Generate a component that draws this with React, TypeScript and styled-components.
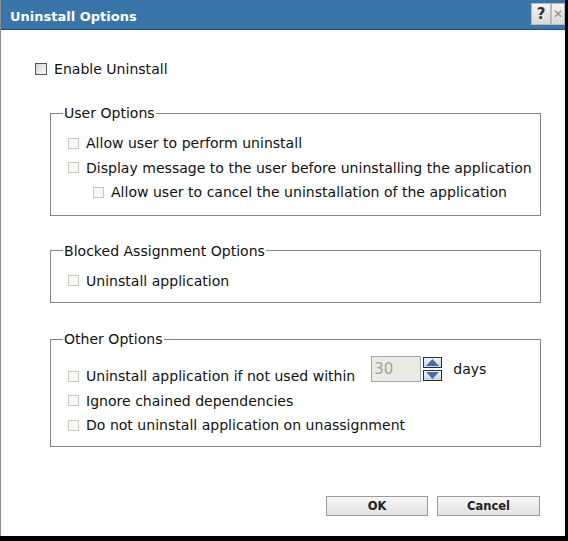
import React from "react";
import styled, { createGlobalStyle } from "styled-components";

const Global = createGlobalStyle`
  html, body { margin: 0; padding: 0; background: #000; }
  body { width: 568px; height: 541px; overflow: hidden; }
  * { box-sizing: border-box; }
`;

const Dialog = styled.div`
  width: 565px;
  height: 536px;
  background: #fff;
  border-left: 1px solid #8c8c8c;
  overflow: hidden;
  display: flex;
  flex-direction: column;
  font-family: "DejaVu Sans", Verdana, sans-serif;
  font-size: 14.05px;
  color: #111;
`;

const TitleBar = styled.div`
  height: 30px;
  flex: none;
  background: #3a75a9;
  border-bottom: 1px solid #24496b;
  display: flex;
  align-items: flex-start;
  justify-content: space-between;
  padding-left: 9px;
`;

const Title = styled.div`
  color: #fff;
  font-weight: bold;
  font-size: 13px;
  line-height: 16px;
  margin-top: 9px;
`;

const TitleButtons = styled.div`
  display: flex;
  margin-top: 3px;
`;

const TitleButton = styled.div<{ $w: number; $muted?: boolean }>`
  width: ${(p) => p.$w}px;
  height: 22px;
  background: linear-gradient(#f4f4f4, #d9d9d9);
  border: 1px solid #b8b8b8;
  color: ${(p) => (p.$muted ? "#8a8a8a" : "#333")};
  font-weight: bold;
  font-size: ${(p) => (p.$muted ? 12 : 15)}px;
  line-height: 20px;
  text-align: center;
  overflow: hidden;
`;

const Content = styled.div`
  flex: 1;
  display: flex;
  flex-direction: column;
  padding: 31px 24px 0 34px;
`;

const Row = styled.label<{ $indent?: number }>`
  display: flex;
  align-items: center;
  gap: 7px;
  height: 24.5px;
  padding-left: ${(p) => p.$indent || 0}px;
  white-space: nowrap;
`;

const TopRow = styled(Row)`
  height: 16px;
`;

const Box = styled.span<{ $enabled?: boolean }>`
  flex: none;
  display: inline-block;
  width: ${(p) => (p.$enabled ? 12 : 11)}px;
  height: ${(p) => (p.$enabled ? 12 : 11)}px;
  border: 1px solid ${(p) => (p.$enabled ? "#4d5566" : "#c9c9c2")};
  background: ${(p) =>
    p.$enabled ? "linear-gradient(135deg, #d6d6d0, #fbfbfb)" : "#f7f7f3"};
`;

const Group = styled.fieldset<{ $top: number; $pt: number; $pb: number }>`
  margin: ${(p) => p.$top}px 0 0 15px;
  padding: ${(p) => p.$pt}px 0 ${(p) => p.$pb}px 17px;
  border: 1px solid #85857e;
  min-width: 0;
`;

const Legend = styled.legend`
  padding: 0 1px;
  margin-left: -5px;
  line-height: 16px;
  color: #111;
`;

const SpinRow = styled.div`
  display: flex;
  align-items: flex-start;
  height: 32.5px;
`;

const SpinLabel = styled(Row)`
  align-self: flex-end;
  height: 25px;
`;

const Spinner = styled.div`
  display: flex;
  align-items: center;
  margin-left: 16px;
  height: 26px;
`;

const NumberField = styled.div`
  width: 50px;
  height: 26px;
  border: 1px solid #9aa6b2;
  background: #ebebe4;
  color: #a3a39c;
  font-size: 15px;
  line-height: 24px;
  padding-left: 2px;
`;

const Arrows = styled.div`
  display: flex;
  flex-direction: column;
  gap: 2px;
  margin-left: 2px;
`;

const Days = styled.span`
  margin-left: 11px;
`;

const Footer = styled.div`
  display: flex;
  justify-content: flex-end;
  gap: 9px;
  margin-top: 49px;
  margin-right: 1px;
`;

const Button = styled.button<{ $w: number }>`
  width: ${(p) => p.$w}px;
  height: 20px;
  border: 1px solid #9c9c9c;
  background: linear-gradient(#f7f7f7, #e2e2e2);
  font-family: "DejaVu Sans", Verdana, sans-serif;
  font-weight: bold;
  font-size: 11.5px;
  color: #222;
  padding: 0;
`;

const Arrow = ({ up }: { up?: boolean }) => (
  <svg width="19" height="11" viewBox="0 0 19 11">
    <defs>
      <linearGradient id={up ? "gu" : "gd"} x1="0" y1="0" x2="0" y2="1">
        <stop offset="0" stopColor="#f4f6f8" />
        <stop offset="1" stopColor="#c9d3dd" />
      </linearGradient>
    </defs>
    <rect x="0.5" y="0.5" width="18" height="10" fill={`url(#${up ? "gu" : "gd"})`} stroke="#2d2d2d" />
    {up ? (
      <polygon points="3,9 16,9 9.5,2" fill="#3d74b0" />
    ) : (
      <polygon points="3,2 16,2 9.5,9" fill="#3d74b0" />
    )}
  </svg>
);

export default function App() {
  return (
    <>
      <Global />
      <Dialog>
        <TitleBar>
          <Title>Uninstall Options</Title>
          <TitleButtons>
            <TitleButton $w={20}>?</TitleButton>
            <TitleButton $w={14} $muted>✕</TitleButton>
          </TitleButtons>
        </TitleBar>
        <Content>
          <TopRow>
            <Box $enabled />
            <span>Enable Uninstall</span>
          </TopRow>

          <Group $top={28} $pt={10} $pb={10}>
            <Legend>User Options</Legend>
            <Row>
              <Box />
              <span>Allow user to perform uninstall</span>
            </Row>
            <Row>
              <Box />
              <span>Display message to the user before uninstalling the application</span>
            </Row>
            <Row $indent={25}>
              <Box />
              <span>Allow user to cancel the uninstallation of the application</span>
            </Row>
          </Group>

          <Group $top={27} $pt={10} $pb={9}>
            <Legend>Blocked Assignment Options</Legend>
            <Row>
              <Box />
              <span>Uninstall application</span>
            </Row>
          </Group>

          <Group $top={28} $pt={9} $pb={8}>
            <Legend>Other Options</Legend>
            <SpinRow>
              <SpinLabel>
                <Box />
                <span>Uninstall application if not used within</span>
              </SpinLabel>
              <Spinner>
                <NumberField>30</NumberField>
                <Arrows>
                  <Arrow up />
                  <Arrow />
                </Arrows>
                <Days>days</Days>
              </Spinner>
            </SpinRow>
            <Row>
              <Box />
              <span>Ignore chained dependencies</span>
            </Row>
            <Row>
              <Box />
              <span>Do not uninstall application on unassignment</span>
            </Row>
          </Group>

          <Footer>
            <Button $w={102}>OK</Button>
            <Button $w={103}>Cancel</Button>
          </Footer>
        </Content>
      </Dialog>
    </>
  );
}
